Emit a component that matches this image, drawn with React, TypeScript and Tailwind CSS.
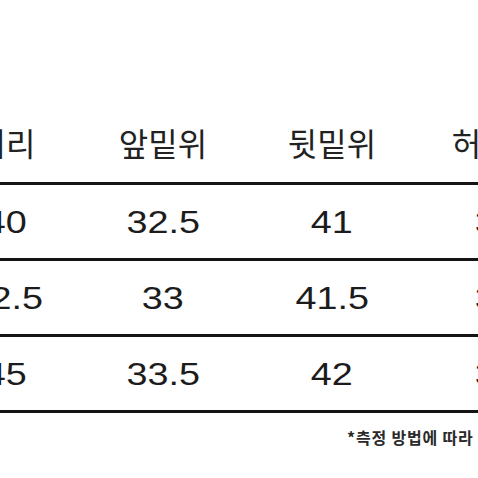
import React from "react";

const headers = ["허리", "앞밑위", "뒷밑위", "허벅지"];
const rows = [
  ["40", "32.5", "41", "30"],
  ["42.5", "33", "41.5", "31"],
  ["45", "33.5", "42", "32"],
];

export default function App() {
  return (
    <div className="w-[478px] h-[478px] overflow-hidden bg-white text-[#1c1c1c]">
      <div className="ml-[-74px] w-[642px]">
        <div className="grid grid-cols-[160px_154px_184px_144px] h-[182px]">
          {headers.map((h) => (
            <div
              key={h}
              className="flex items-end justify-center pb-[20px] text-[32px] leading-[40px] whitespace-nowrap text-[#222]"
              style={{ fontFamily: '"Noto Sans CJK KR", "Noto Sans", sans-serif' }}
            >
              {h}
            </div>
          ))}
        </div>
        {rows.map((r, i) => (
          <div
            key={i}
            className="grid grid-cols-[160px_154px_184px_144px] h-[76px] border-t-[3px] border-[#141414]"
          >
            {r.map((v, j) => (
              <div
                key={j}
                className="flex items-center justify-center text-[32px] leading-[40px] whitespace-nowrap"
                style={{ fontFamily: '"Liberation Sans", Arial, sans-serif' }}
              >
                <span className="inline-block scale-x-[1.18]">{v}</span>
              </div>
            ))}
          </div>
        ))}
        <div className="h-[3px] bg-[#141414]" />
      </div>
      <div
        className="mt-[14px] ml-[347px] whitespace-nowrap text-[16px] leading-[20px] tracking-[0.8px] font-bold text-[#2a2a2a]"
        style={{ fontFamily: '"Noto Sans CJK KR", "Noto Sans", sans-serif' }}
      >
        *측정 방법에 따라 1~3cm 오차가 있을 수 있습니다
      </div>
    </div>
  );
}
